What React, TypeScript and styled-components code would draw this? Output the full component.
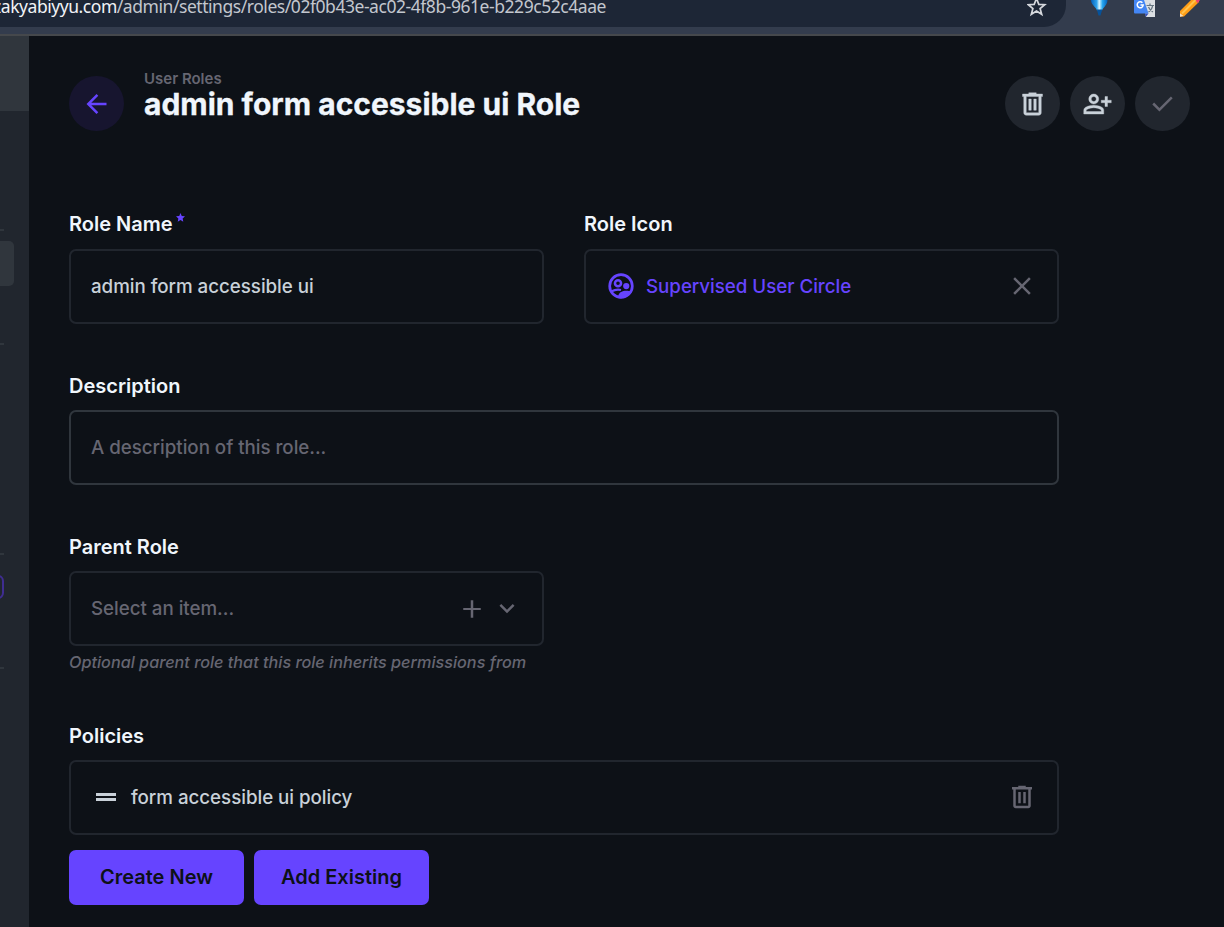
import React from "react";
import styled, { createGlobalStyle } from "styled-components";

const GlobalStyle = createGlobalStyle`
  * { box-sizing: border-box; }
  body {
    margin: 0;
    background: #0d1117;
    font-family: Inter, "Liberation Sans", sans-serif;
    overflow: hidden;
  }
`;

const Screen = styled.div`
  display: flex;
  flex-direction: column;
  width: 1224px;
  height: 927px;
  overflow: hidden;
  background: #0d1117;
`;

const BrowserBar = styled.div`
  display: flex;
  flex: none;
  align-items: flex-start;
  height: 36px;
  background: #333c4d;
  border-bottom: 2px solid #45484c;
`;

const AddressField = styled.div`
  display: flex;
  justify-content: space-between;
  width: 1066px;
  height: 27px;
  padding-right: 19px;
  overflow: hidden;
  background: #1d2636;
  border-bottom-right-radius: 22px;
`;

const Url = styled.span`
  margin: -7px 0 0 -7px;
  font-family: "Noto Sans", sans-serif;
  font-size: 17.5px;
  line-height: 26px;
  letter-spacing: -0.45px;
  white-space: nowrap;
  color: #c3c7ce;
`;

const Host = styled.span`
  color: #f1f3f6;
`;

const Extensions = styled.div`
  display: flex;
  gap: 24px;
  padding-left: 24px;
`;

const Glyph = styled.svg`
  display: block;
  flex: none;
`;

const Workspace = styled.div`
  display: flex;
  flex: 1;
  min-height: 0;
`;

const Sidebar = styled.aside`
  display: flex;
  flex: none;
  flex-direction: column;
  width: 29px;
  background: #21262e;
`;

const SidebarHead = styled.div`
  height: 75px;
  background: #30363d;
`;

const Divider = styled.div<{ $gap: number }>`
  width: 4px;
  height: 2px;
  margin-top: ${(p) => p.$gap}px;
  background: #30363d;
`;

const ActiveItem = styled.div`
  width: 14px;
  height: 45px;
  margin-top: 10px;
  background: #30363d;
  border-radius: 0 5px 5px 0;
`;

const OutlinedItem = styled.div`
  width: 24px;
  height: 24px;
  margin: 20px 0 0 -20px;
  border: 2px solid #3f2d91;
  border-radius: 6px;
`;

const Main = styled.main`
  flex: 1;
  padding: 40px 34px 0 40px;
`;

const Header = styled.header`
  display: flex;
  align-items: center;
  height: 55px;
`;

const RoundButton = styled.button<{ $bg: string; $color: string }>`
  display: flex;
  align-items: center;
  justify-content: center;
  width: 55px;
  height: 55px;
  padding: 0;
  border: 0;
  border-radius: 50%;
  background: ${(p) => p.$bg};
  color: ${(p) => p.$color};
`;

const Titles = styled.div`
  flex: 1;
  align-self: flex-start;
  margin: -6px 0 0 20px;
`;

const Breadcrumb = styled.div`
  font-size: 15px;
  font-weight: 600;
  line-height: 18px;
  color: #666672;
`;

const Title = styled.h1`
  margin: 0;
  font-size: 30px;
  font-weight: 700;
  line-height: 32px;
  -webkit-text-stroke: 0.3px #f0f6fc;
  color: #f0f6fc;
`;

const Actions = styled.div`
  display: flex;
  gap: 10px;
`;

const Form = styled.form`
  display: grid;
  grid-template-columns: 475px 475px;
  column-gap: 40px;
  margin-top: 78px;
`;

const Field = styled.div<{ $full?: boolean; $height: number }>`
  grid-column: ${(p) => (p.$full ? "1 / -1" : "auto")};
  height: ${(p) => p.$height}px;
`;

const Label = styled.div<{ $drop?: boolean }>`
  display: flex;
  height: 40px;
  padding-top: ${(p) => (p.$drop ? 1 : 0)}px;
  font-size: 20px;
  font-weight: 600;
  line-height: 30px;
  color: #f0f6fc;
`;

const Required = styled(Glyph)`
  margin: 4px 0 0 3px;
  color: #6644ff;
`;

const Control = styled.div<{ $strong?: boolean; $tone?: string; $narrow?: boolean }>`
  display: flex;
  align-items: center;
  width: ${(p) => (p.$narrow ? "475px" : "100%")};
  height: 75px;
  padding: 0 20px;
  border: 2px solid ${(p) => (p.$strong ? "#30363d" : "#21262e")};
  border-radius: 7px;
  font-size: 18.75px;
  font-weight: 500;
  letter-spacing: -0.035px;
  color: ${(p) => p.$tone ?? "#c9d1d9"};
`;

const Value = styled.span`
  flex: 1;
`;

const IconSlot = styled.span<{ $color?: string; $after?: number; $low?: boolean }>`
  display: flex;
  padding: ${(p) => (p.$low ? "1px 0 0" : "0 0 1px")};
  margin-right: ${(p) => p.$after ?? 0}px;
  color: ${(p) => p.$color ?? "#666672"};
`;

const Note = styled.div`
  margin-top: 5px;
  font-size: 16.25px;
  font-style: italic;
  font-weight: 500;
  letter-spacing: -0.015px;
  line-height: 23px;
  color: #666672;
`;

const ButtonRow = styled.div`
  display: flex;
  gap: 10px;
  margin-top: 15px;
`;

const PrimaryButton = styled.button`
  width: 175px;
  height: 55px;
  padding: 0 0 2px;
  border: 0;
  border-radius: 7px;
  background: #6644ff;
  color: #0d1117;
  font-family: inherit;
  font-size: 20px;
  font-weight: 600;
`;

const paths = {
  back: "M7.825 13l5.6 5.6L12 20l-8-8 8-8 1.425 1.4-5.6 5.6H20v2H7.825Z",
  trash:
    "M7 21q-.825 0-1.413-.587T5 19V6H4V4h5V3h6v1h5v2h-1v13q0 .825-.588 1.413T17 21H7ZM17 6H7v13h10V6ZM9 17h2V8H9v9Zm4 0h2V8h-2v9Z",
  personAdd:
    "M18 14v-3h-3V9h3V6h2v3h3v2h-3v3h-2Zm-9-2q-1.65 0-2.825-1.175T5 8q0-1.65 1.175-2.825T9 4q1.65 0 2.825 1.175T13 8q0 1.65-1.175 2.825T9 12Zm-8 8v-2.8q0-.85.438-1.562T2.6 14.55q1.55-.775 3.15-1.163T9 13q1.65 0 3.25.387t3.15 1.163q.725.375 1.163 1.088T17 17.2V20H1Zm2-2h12v-.8q0-.275-.137-.5t-.363-.35q-1.35-.675-2.725-1.012T9 15q-1.4 0-2.775.338T3.5 16.35q-.225.125-.363.35T3 17.2v.8Zm6-8q.825 0 1.412-.588T11 8q0-.825-.588-1.412T9 6q-.825 0-1.413.588T7 8q0 .825.588 1.412T9 10Z",
  check: "m9.55 18-5.7-5.7 1.425-1.425L9.55 15.15l9.175-9.175L20.15 7.4 9.55 18Z",
  close:
    "M6.4 19 5 17.6l5.6-5.6L5 6.4 6.4 5l5.6 5.6L17.6 5 19 6.4 13.4 12l5.6 5.6-1.4 1.4-5.6-5.6L6.4 19Z",
  add: "M11 19v-6.200H5v-1.600h6V5h2v6.200h6v1.600h-6V19h-2Z",
  expand: "m12 15.4-6-6L7.4 8l4.600 4.600L16.600 8 18 9.400l-6 6Z",
  drag: "M4 15.2v-2.400h16v2.400H4Zm0-4V8.800h16v2.400H4Z",
};

type IconProps = { name: keyof typeof paths; weight?: number; centered?: boolean };

/* The centered variant has an odd size, so it sits in the exact middle of a 55px button. */
function Icon({ name, weight = 0, centered = false }: IconProps) {
  const size = centered ? 31 : 30;
  return (
    <Glyph
      width={size}
      height={size}
      viewBox={centered ? "-0.4 -0.8 24.8 24.8" : "0 0 24 24"}
      fill="currentColor"
      fillRule="evenodd"
      stroke="currentColor"
      strokeWidth={weight}
    >
      <path d={paths[name]} />
    </Glyph>
  );
}

function SupervisedUserIcon() {
  return (
    <Glyph width="30" height="30" viewBox="0 0 24 24" fill="none" stroke="currentColor">
      <circle cx="12" cy="12" r="9.050" strokeWidth="2.150" />
      <circle cx="9.600" cy="9.800" r="2.450" strokeWidth="2" />
      <circle cx="16.200" cy="12" r="2.500" fill="currentColor" stroke="none" />
      <path d="M4.500 16.200Q7 14.900 9.600 14.900 10.900 14.900 12 15.200" strokeWidth="1.700" />
      <path
        d="M10 21.500V19.400C10.400 17 13 15.700 16.200 15.700 17.600 15.700 19 15.900 20.700 16.600A10 10 0 0 1 10 21.500Z"
        fill="currentColor"
        stroke="none"
      />
    </Glyph>
  );
}

export default function App() {
  return (
    <>
      <GlobalStyle />
      <Screen>
        <BrowserBar>
          <AddressField>
            <Url>
              <Host>zakyabiyyu.com</Host>/admin/settings/roles/02f0b43e-ac02-4f8b-961e-b229c52c4aae
            </Url>
            <Glyph width="20" height="18" viewBox="0 0 20 18" fill="none" stroke="#d5d8dd" strokeWidth="1.7">
              <path d="M9.500 -1.6 11.800 4.400 17.700 4.700 13.100 8.500 14.700 14.300 9.500 11 4.300 14.300 5.900 8.500 1.300 4.700 7.200 4.400Z" />
            </Glyph>
          </AddressField>
          <Extensions>
            <Glyph width="20" height="17" viewBox="0 0 20 17">
              <defs>
                <linearGradient id="balloon" x1="0" x2="1" y1="0" y2="0">
                  <stop offset="0" stopColor="#0560b8" />
                  <stop offset="0.35" stopColor="#2fa4ee" />
                  <stop offset="0.5" stopColor="#d9f6ff" />
                  <stop offset="0.7" stopColor="#25a5ee" />
                  <stop offset="1" stopColor="#0560b8" />
                </linearGradient>
              </defs>
              <path d="M1 0h16.500c0 5-4 7-5.500 10.500H7C6 7 1 5 1 0Z" fill="url(#balloon)" />
              <path d="M6.800 9.500h5.500L10.500 15.500H8.500Z" fill="#07529a" />
            </Glyph>
            <Glyph width="22" height="18" viewBox="0 0 22 18">
              <path d="M8 0h13v17h-9Z" fill="#dcdfe3" />
              <path d="M0 0h10l4.500 13.500H1q-1 0-1-1Z" fill="#4486f4" />
              <path d="m11 13.500 3.500 0-2.700 3.500Z" fill="#304dba" />
              <path d="M8.400 2.700A3 3 0 1 0 9.200 5H6.500" stroke="#fff" strokeWidth="1.500" fill="none" />
              <path
                d="M12.500 5.500H20M16 3.500v2m2.700 0c-.5 3-2.500 5.500-4.200 6.500m0-5c1 2.500 2.500 4 4.500 5"
                stroke="#667580"
                strokeWidth="1.200"
                fill="none"
              />
            </Glyph>
            <Glyph width="22" height="18" viewBox="2 0 22 18">
              <path d="M1 12 14-1h7v3L6 16.500l-5.500.3Z" fill="#ff9d16" />
              <path d="M4 13.500 18-.5" stroke="#ffc34d" strokeWidth="2" />
              <path d="M1 12.500 5.500 16l-5 1Z" fill="#f5dfc2" />
              <path d="m17-1 5-1v2l-2.500 3.200Z" fill="#ef3f72" />
            </Glyph>
          </Extensions>
        </BrowserBar>
        <Workspace>
          <Sidebar>
            <SidebarHead />
            <Divider $gap={118} />
            <ActiveItem />
            <Divider $gap={57} />
            <Divider $gap={208} />
            <OutlinedItem />
            <Divider $gap={68} />
          </Sidebar>
          <Main>
            <Header>
              <RoundButton type="button" $bg="#17152f" $color="#6644ff">
                <Icon name="back" centered />
              </RoundButton>
              <Titles>
                <Breadcrumb>User Roles</Breadcrumb>
                <Title>admin form accessible ui Role</Title>
              </Titles>
              <Actions>
                <RoundButton type="button" $bg="#21262e" $color="#c9d1d9">
                  <Icon name="trash" weight={0.3} centered />
                </RoundButton>
                <RoundButton type="button" $bg="#21262e" $color="#c9d1d9">
                  <Icon name="personAdd" weight={0.3} centered />
                </RoundButton>
                <RoundButton type="button" $bg="#21262e" $color="#666672">
                  <Icon name="check" centered />
                </RoundButton>
              </Actions>
            </Header>
            <Form>
              <Field $height={161}>
                <Label>
                  Role Name
                  <Required width="9" height="9" viewBox="0 0 10 10" fill="currentColor">
                    <path d="M5 0 6.400 3.300 10 3.700 7.400 6.100 8.100 9.700 5 7.900 1.900 9.700 2.600 6.100 0 3.700 3.600 3.300Z" />
                  </Required>
                </Label>
                <Control>
                  <Value>admin form accessible ui</Value>
                </Control>
              </Field>
              <Field $height={161}>
                <Label>Role Icon</Label>
                <Control $tone="#6644ff">
                  <IconSlot $color="#6644ff" $after={10}>
                    <SupervisedUserIcon />
                  </IconSlot>
                  <Value>Supervised User Circle</Value>
                  <IconSlot>
                    <Icon name="close" />
                  </IconSlot>
                </Control>
              </Field>
              <Field $full $height={161}>
                <Label $drop>Description</Label>
                <Control $strong $tone="#666672">
                  <Value>A description of this role...</Value>
                </Control>
              </Field>
              <Field $full $height={189}>
                <Label $drop>Parent Role</Label>
                <Control $narrow $tone="#666672">
                  <Value>Select an item...</Value>
                  <IconSlot $after={5} $low>
                    <Icon name="add" />
                  </IconSlot>
                  <IconSlot $low>
                    <Icon name="expand" />
                  </IconSlot>
                </Control>
                <Note>Optional parent role that this role inherits permissions from</Note>
              </Field>
              <Field $full $height={200}>
                <Label $drop>Policies</Label>
                <Control>
                  <IconSlot $color="#c9d1d9" $after={10}>
                    <Icon name="drag" />
                  </IconSlot>
                  <Value>form accessible ui policy</Value>
                  <IconSlot>
                    <Icon name="trash" />
                  </IconSlot>
                </Control>
                <ButtonRow>
                  <PrimaryButton type="button">Create New</PrimaryButton>
                  <PrimaryButton type="button">Add Existing</PrimaryButton>
                </ButtonRow>
              </Field>
            </Form>
          </Main>
        </Workspace>
      </Screen>
    </>
  );
}
